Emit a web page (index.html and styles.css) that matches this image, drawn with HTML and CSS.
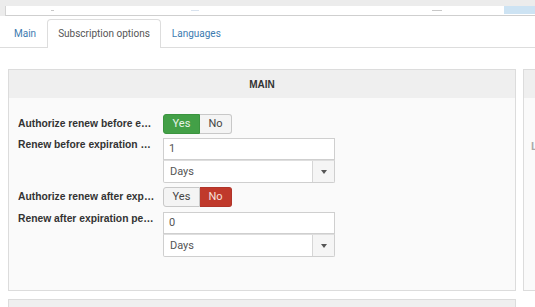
FILE: index.html
```html
<!DOCTYPE html>
<html>
<head>
<meta charset="utf-8">
<link rel="stylesheet" href="styles.css">
</head>
<body>
<div class="toolbar">
  <div class="toolbar-inner">
    <span class="tb-mark m1"></span>
    <span class="tb-mark m2"></span>
    <span class="tb-mark m3"></span>
    <span class="tb-blue"></span>
  </div>
</div>
<ul class="tabs">
  <li class="tab"><a href="#">Main</a></li>
  <li class="tab active"><a href="#">Subscription options</a></li>
  <li class="tab"><a href="#">Languages</a></li>
</ul>
<div class="content">
  <div class="panels">
    <section class="panel panel-main">
      <div class="panel-head">MAIN</div>
      <div class="panel-body">
        <div class="row row-center">
          <div class="label">Authorize renew before expiration</div>
          <div class="btn-group">
            <span class="btn btn-yes-on">Yes</span><span class="btn">No</span>
          </div>
        </div>
        <div class="row">
          <div class="label">Renew before expiration period</div>
          <div class="stack">
            <div class="input">1</div>
            <div class="select"><span class="select-text">Days</span><span class="select-arrow"><i class="caret"></i></span></div>
          </div>
        </div>
        <div class="row row-center row-gap">
          <div class="label">Authorize renew after expiration</div>
          <div class="btn-group">
            <span class="btn">Yes</span><span class="btn btn-no-on">No</span>
          </div>
        </div>
        <div class="row">
          <div class="label">Renew after expiration period</div>
          <div class="stack">
            <div class="input">0</div>
            <div class="select"><span class="select-text">Days</span><span class="select-arrow"><i class="caret"></i></span></div>
          </div>
        </div>
      </div>
    </section>
    <section class="panel panel-side">
      <div class="panel-head"></div>
      <div class="panel-body side-body"><span class="side-label">Language</span></div>
    </section>
  </div>
  <section class="panel panel-next">
    <div class="panel-head"></div>
  </section>
</div>
</body>
</html>
```
FILE: styles.css
```css
html, body {
  margin: 0;
  padding: 0;
  background: #fff;
  overflow: hidden;
  width: 535px;
  height: 307px;
}
body {
  font-family: Roboto, "Liberation Sans", sans-serif;
  font-size: 12px;
  color: #555;
}
.toolbar {
  background: #ececec;
  height: 16px;
  padding-top: 6px;
  padding-left: 5px;
  box-sizing: border-box;
}
.toolbar-inner {
  display: flex;
  align-items: center;
  height: 10px;
  box-sizing: border-box;
  background: #fff;
  border-left: 1px solid #d4d4d4;
  border-bottom: 1px solid #cfcfcf;
}
.tb-mark {
  display: block;
  height: 1px;
  background: #c8c8c8;
}
.m1 { width: 3px; margin-left: 45px; }
.m2 { width: 8px; margin-left: 137px; background: #d8e2ee; }
.m3 { width: 10px; margin-left: 233px; }
.tb-blue {
  margin-left: auto;
  width: 31px;
  height: 8px;
  align-self: flex-start;
  background: #cde3f3;
}
.tabs {
  list-style: none;
  margin: 3px 0 0;
  padding: 0 0 0 3px;
  display: flex;
  height: 28px;
  border-bottom: 1px solid #dddddd;
}
.tab {
  margin-bottom: -1px;
}
.tab a {
  display: block;
  height: 28px;
  line-height: 28px;
  padding: 0 10px;
  font-size: 10px;
  color: #3d7bb0;
  text-decoration: none;
  border: 1px solid transparent;
  border-bottom: 0;
  border-radius: 4px 4px 0 0;
  box-sizing: border-box;
}
.tab.active a {
  color: #555;
  background: #fff;
  border-color: #dddddd;
  height: 29px;
}
.content {
  padding: 21px 0 0 8px;
}
.panels {
  display: flex;
  gap: 7px;
}
.panel {
  border: 1px solid #dcdcdc;
  background: #fafafa;
  box-sizing: border-box;
}
.panel-main {
  flex: 0 0 508px;
  height: 222px;
}
.panel-side {
  flex: 0 0 200px;
  height: 222px;
}
.panel-head {
  height: 28px;
  background: #efefef;
  text-align: center;
  line-height: 29px;
  font-family: "Liberation Sans", Arial, sans-serif;
  font-weight: bold;
  font-size: 10px;
  color: #333;
}
.panel-body {
  padding: 16px 0 0 9px;
  display: flex;
  flex-direction: column;
  gap: 4px;
}
.row {
  display: flex;
  align-items: flex-start;
}
.row-center {
  align-items: center;
}
.row-gap {
  margin-bottom: 1px;
}
.label {
  width: 137px;
  margin-right: 8px;
  white-space: nowrap;
  overflow: hidden;
  text-overflow: ellipsis;
  font-family: "Liberation Sans", Arial, sans-serif;
  font-weight: bold;
  font-size: 10.3px;
  line-height: 14px;
  color: #333;
}
.btn-group {
  display: flex;
  height: 20px;
}
.btn {
  display: block;
  height: 20px;
  line-height: 18px;
  box-sizing: border-box;
  border: 1px solid #c8c8c8;
  background: #f4f4f4;
  color: #444;
  font-size: 11px;
}
.btn:first-child {
  border-radius: 3px 0 0 3px;
  width: 37px;
  text-align: center;
}
.btn:last-child {
  border-radius: 0 3px 3px 0;
  border-left: 0;
  width: 32px;
  text-align: center;
}
.btn-yes-on {
  background: #43a047;
  border-color: #3b943f;
  color: #e8f5e8;
}
.btn-no-on {
  background: #c0392b;
  border-color: #b0342a;
  color: #f6e0dd;
}
.stack {
  display: flex;
  flex-direction: column;
  width: 172px;
}
.input {
  height: 22px;
  box-sizing: border-box;
  border: 1px solid #cfcfcf;
  background: #fff;
  line-height: 20px;
  padding-left: 5px;
  color: #555;
  font-size: 11px;
}
.select {
  display: flex;
  height: 23px;
  box-sizing: border-box;
  border: 1px solid #cfcfcf;
  border-top-color: #dedede;
  background: #fff;
  border-radius: 0 0 2px 2px;
}
.select-text {
  flex: 1;
  line-height: 21px;
  padding-left: 6px;
  font-size: 11px;
  color: #555;
}
.select-arrow {
  width: 21px;
  border-left: 1px solid #d6d6d6;
  background: #f5f5f5;
  display: flex;
  align-items: center;
  justify-content: center;
}
.caret {
  display: block;
  width: 0;
  height: 0;
  border-left: 3px solid transparent;
  border-right: 3px solid transparent;
  border-top: 4px solid #555;
}
.side-body {
  padding: 42px 0 0 7px;
}
.side-label {
  font-family: "Liberation Sans", Arial, sans-serif;
  font-weight: bold;
  font-size: 11px;
  color: #aaa;
}
.panel-next {
  margin-top: 8px;
  width: 508px;
  height: 30px;
}
```
